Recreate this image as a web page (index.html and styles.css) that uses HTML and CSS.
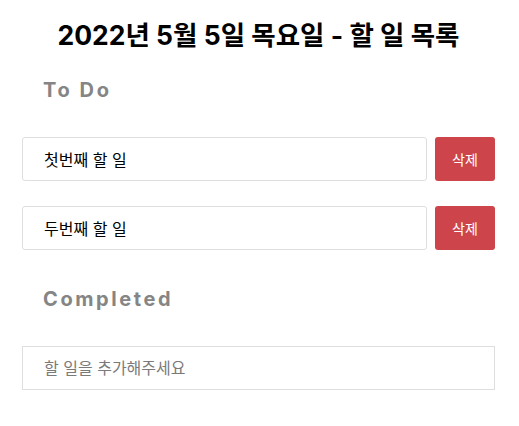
FILE: index.html
```html
<!DOCTYPE html>
<html lang="ko">
<head>
<meta charset="utf-8">
<link rel="stylesheet" href="styles.css">
</head>
<body>
<main class="app">
  <h1 class="title">2022년 5월 5일 목요일 - 할 일 목록</h1>
  <h2 class="section">To Do</h2>
  <ul class="list">
    <li class="row">
      <input class="task" type="text" value="첫번째 할 일">
      <button class="del">삭제</button>
    </li>
    <li class="row">
      <input class="task" type="text" value="두번째 할 일">
      <button class="del">삭제</button>
    </li>
  </ul>
  <h2 class="section">Completed</h2>
  <input class="add" type="text" placeholder="할 일을 추가해주세요">
</main>
</body>
</html>
```
FILE: styles.css
```css
* { box-sizing: border-box; }
body {
  margin: 0;
  background: #fff;
  font-family: Inter, "Noto Sans CJK KR", sans-serif;
  color: #000;
}
.app {
  padding: 0 24px 0 22px;
  display: flex;
  flex-direction: column;
}
.title {
  margin: 18px 0 0;
  text-align: center;
  font-size: 26.5px;
  line-height: 34px;
  font-weight: 700;
}
.section {
  margin: 0;
  padding-left: 21px;
  font-size: 20px;
  line-height: 24px;
  font-weight: 700;
  letter-spacing: 2.6px;
  color: #858585;
}
.title + .section { margin-top: 26px; }
.list {
  list-style: none;
  margin: 35px 0 0;
  padding: 0;
  display: flex;
  flex-direction: column;
  gap: 25px;
}
.row {
  display: flex;
  gap: 8px;
  height: 44px;
}
.task {
  flex: 1;
  height: 44px;
  border: 1px solid #dedede;
  border-radius: 3px;
  padding: 0 21px;
  font-family: inherit;
  font-size: 16px;
  color: #000;
  outline: none;
}
.del {
  width: 60px;
  height: 44px;
  border: none;
  border-radius: 3px;
  background: #cd454b;
  color: #fff;
  font-family: inherit;
  font-size: 14px;
  padding: 0;
}
.list + .section { margin-top: 37px; }
.add {
  margin-top: 35px;
  height: 44px;
  border: 1px solid #dedede;
  border-radius: 0;
  padding: 0 21px;
  font-family: inherit;
  font-size: 16px;
  outline: none;
}
.add::placeholder { color: #7a7a7a; }
```
